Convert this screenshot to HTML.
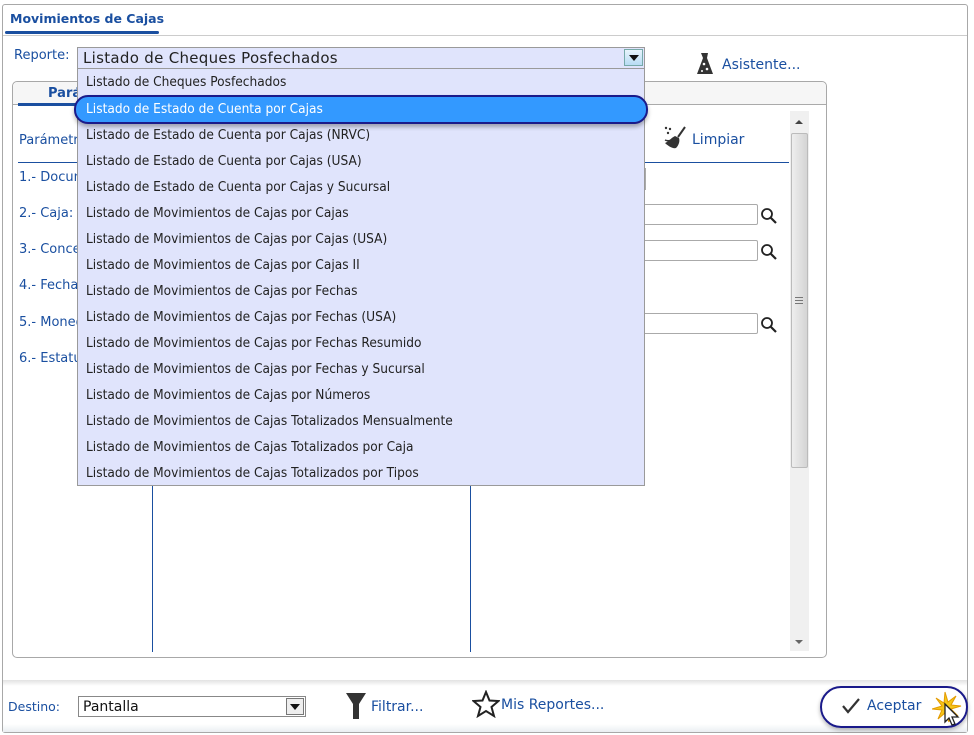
<!DOCTYPE html>
<html><head><meta charset="utf-8"><style>
*{box-sizing:border-box;margin:0;padding:0}
body{width:974px;height:735px;background:#fff;font-family:"DejaVu Sans","Liberation Sans",sans-serif;position:relative;overflow:hidden;color:#1a4fa0}
.a{position:absolute}
.outer{left:2px;top:4px;width:966px;height:729px;border:1px solid #a8a8a8;border-radius:3px}
.lbl{font-size:13px;color:#1a4fa0;white-space:nowrap}
.dd{left:77px;top:69px;width:568px;height:417px;background:#e0e4fc;border:1px solid #9a9a9a;border-top:none}
.it{position:absolute;left:8px;font-size:13px;color:#222;font-family:"DejaVu Sans",sans-serif;white-space:nowrap;transform:scaleX(0.94);transform-origin:left}
.inp{position:absolute;left:640px;width:118px;height:21px;border:1px solid #aaa;border-radius:2px;background:#fff}
</style></head><body>
<div class="a outer"></div>
<div class="a" style="left:3px;top:35px;width:964px;height:1px;background:#ccc"></div>
<div class="a lbl" style="left:10px;top:11px;font-weight:bold;font-size:12.5px;color:#1a4fa0">Movimientos de Cajas</div>
<div class="a" style="left:5px;top:31px;width:154px;height:3px;background:#1a4fa0;border-radius:2px"></div>

<div class="a lbl" style="left:14px;top:48px">Reporte:</div>
<div class="a" style="left:77px;top:47px;width:568px;height:22px;border:1px solid #9a9a9a;background:#e0e4fc"></div>
<div class="a" style="left:83px;top:49px;font-size:15px;color:#222;white-space:nowrap;letter-spacing:0.3px">Listado de Cheques Posfechados</div>
<div class="a" style="left:624px;top:49px;width:19px;height:17px;border:1px solid #7aa;background:linear-gradient(#e8f4fc,#b8dcf4)"></div>
<div class="a" style="left:629px;top:55px;width:0;height:0;border-left:5px solid transparent;border-right:5px solid transparent;border-top:6px solid #111"></div>

<svg class="a" style="left:696px;top:52px" width="18" height="24"><path d="M5 1h7l-1 5 6 16H1L7 6z" fill="#333"/><circle cx="8" cy="12" r="1.3" fill="#fff"/><circle cx="11" cy="17" r="1.3" fill="#fff"/><circle cx="6" cy="19" r="1" fill="#fff"/></svg>
<div class="a lbl" style="left:722px;top:57px;font-size:14px">Asistente...</div>

<!-- inner panel -->
<div class="a" style="left:12px;top:81px;width:815px;height:577px;border:1px solid #a8a8a8;border-radius:5px;background:#fff"></div>
<div class="a" style="left:13px;top:82px;width:813px;height:23px;background:#f6f6f6;border-bottom:1px solid #aaa;border-radius:5px 5px 0 0"></div>
<div class="a lbl" style="left:48px;top:86px;font-weight:bold">Pará</div>
<div class="a" style="left:18px;top:103px;width:70px;height:3px;background:#1a4fa0"></div>
<div class="a lbl" style="left:19px;top:133px">Parámetros</div>
<div class="a" style="left:18px;top:162px;width:771px;height:1px;background:#1a4fa0"></div>
<div class="a lbl" style="left:19px;top:170px">1.- Documento</div>
<div class="a lbl" style="left:19px;top:206px">2.- Caja:</div>
<div class="a lbl" style="left:19px;top:242px">3.- Concepto</div>
<div class="a lbl" style="left:19px;top:278px">4.- Fecha</div>
<div class="a lbl" style="left:19px;top:315px">5.- Moneda</div>
<div class="a lbl" style="left:19px;top:351px">6.- Estatus</div>
<div class="a" style="left:152px;top:470px;width:1px;height:182px;background:#1a4fa0"></div>
<div class="a" style="left:470px;top:470px;width:1px;height:182px;background:#1a4fa0"></div>
<div class="a" style="left:644px;top:168px;width:2px;height:22px;background:#aaa"></div>
<div class="inp" style="top:204px"></div>
<div class="inp" style="top:240px"></div>
<div class="inp" style="top:313px"></div>
<svg class="a" style="left:760px;top:207px" width="18" height="18"><circle cx="7" cy="7" r="5" fill="none" stroke="#222" stroke-width="1.8"/><path d="M11 11l5 5" stroke="#222" stroke-width="2.2"/></svg>
<svg class="a" style="left:760px;top:243px" width="18" height="18"><circle cx="7" cy="7" r="5" fill="none" stroke="#222" stroke-width="1.8"/><path d="M11 11l5 5" stroke="#222" stroke-width="2.2"/></svg>
<svg class="a" style="left:760px;top:316px" width="18" height="18"><circle cx="7" cy="7" r="5" fill="none" stroke="#222" stroke-width="1.8"/><path d="M11 11l5 5" stroke="#222" stroke-width="2.2"/></svg>
<svg class="a" style="left:663px;top:126px" width="24" height="24"><circle cx="3" cy="2" r="1.2" fill="#333"/><circle cx="7" cy="3" r="1.2" fill="#333"/><circle cx="5" cy="7" r="1.2" fill="#333"/><path d="M22 1l-7 10" stroke="#333" stroke-width="2"/><path d="M12 10c-4 2-7 6-10 7 3 3 8 6 11 5 3-3 4-7 3-10z" fill="#333"/><path d="M2 14c2 1 5 1 6 0" stroke="#333" stroke-width="1.5" fill="none"/></svg>
<div class="a lbl" style="left:692px;top:132px;font-size:14px">Limpiar</div>
<!-- scrollbar -->
<div class="a" style="left:790px;top:111px;width:19px;height:540px;background:#f0f0f0"></div>
<div class="a" style="left:791px;top:133px;width:17px;height:335px;background:linear-gradient(90deg,#eee,#d4d4d4);border:1px solid #bbb;border-radius:2px"></div>
<div class="a" style="left:795px;top:120px;border-left:4px solid transparent;border-right:4px solid transparent;border-bottom:4px solid #444"></div>
<div class="a" style="left:795px;top:640px;border-left:4px solid transparent;border-right:4px solid transparent;border-top:4px solid #666"></div>
<div class="a" style="left:795px;top:297px;width:8px;height:7px;border-top:1px solid #777;border-bottom:1px solid #777"></div>
<div class="a" style="left:795px;top:300px;width:8px;height:1px;background:#777"></div>

<!-- dropdown -->
<div class="a dd">
<div class="it" style="top:6px">Listado de Cheques Posfechados</div>
<div style="position:absolute;left:-4px;top:26px;width:574px;height:29px;background:#3399ff;border:2px solid #1a1a8a;border-radius:14px;box-shadow:0 3px 4px rgba(0,0,0,.3)"></div>
<div class="it" style="top:33px;color:#fff">Listado de Estado de Cuenta por Cajas</div>
<div class="it" style="top:59px">Listado de Estado de Cuenta por Cajas (NRVC)</div>
<div class="it" style="top:85px">Listado de Estado de Cuenta por Cajas (USA)</div>
<div class="it" style="top:111px">Listado de Estado de Cuenta por Cajas y Sucursal</div>
<div class="it" style="top:137px">Listado de Movimientos de Cajas por Cajas</div>
<div class="it" style="top:163px">Listado de Movimientos de Cajas por Cajas (USA)</div>
<div class="it" style="top:189px">Listado de Movimientos de Cajas por Cajas II</div>
<div class="it" style="top:215px">Listado de Movimientos de Cajas por Fechas</div>
<div class="it" style="top:241px">Listado de Movimientos de Cajas por Fechas (USA)</div>
<div class="it" style="top:267px">Listado de Movimientos de Cajas por Fechas Resumido</div>
<div class="it" style="top:293px">Listado de Movimientos de Cajas por Fechas y Sucursal</div>
<div class="it" style="top:319px">Listado de Movimientos de Cajas por Números</div>
<div class="it" style="top:345px">Listado de Movimientos de Cajas Totalizados Mensualmente</div>
<div class="it" style="top:371px">Listado de Movimientos de Cajas Totalizados por Caja</div>
<div class="it" style="top:397px">Listado de Movimientos de Cajas Totalizados por Tipos</div>
</div>

<!-- bottom -->
<div class="a" style="left:3px;top:680px;width:964px;height:52px;background:linear-gradient(#e2e2e2,#fff 6px,#fff 44px,#eaeef2)"></div>
<div class="a lbl" style="left:8px;top:699px;font-size:12.5px">Destino:</div>
<div class="a" style="left:78px;top:696px;width:228px;height:21px;border:1px solid #888;background:#fff"></div>
<div class="a" style="left:83px;top:699px;font-size:14px;color:#111">Pantalla</div>
<div class="a" style="left:286px;top:698px;width:18px;height:17px;border:1px solid #777;background:#eee"></div>
<div class="a" style="left:290px;top:704px;border-left:5px solid transparent;border-right:5px solid transparent;border-top:6px solid #111"></div>
<svg class="a" style="left:345px;top:692px" width="22" height="28"><path d="M1 1h20l-7 11v15h-6V12z" fill="#333"/></svg>
<div class="a lbl" style="left:371px;top:699px;font-size:14px">Filtrar...</div>
<svg class="a" style="left:472px;top:690px" width="28" height="28"><path d="M14 2l3.5 8.5 9 .5-7 6 2.5 9-8-5-8 5 2.5-9-7-6 9-.5z" fill="none" stroke="#222" stroke-width="2"/></svg>
<div class="a lbl" style="left:501px;top:697px;font-size:14px">Mis Reportes...</div>
<div class="a" style="left:820px;top:686px;width:148px;height:42px;border:2px solid #1a1a8a;border-radius:21px;box-shadow:0 2px 4px rgba(0,0,0,.3)"></div>
<svg class="a" style="left:841px;top:697px" width="20" height="18"><path d="M2 9l5 6L18 2" fill="none" stroke="#333" stroke-width="2.2"/></svg>
<div class="a lbl" style="left:867px;top:698px;font-size:14px">Aceptar</div>
<svg class="a" style="left:932px;top:690px" width="34" height="40"><path d="M13 2l3 10 8-6-5 9 10 1-10 3 7 7-9-4 0 10-4-9-7 6 4-9-10-1 10-3-6-8 8 5z" fill="#f5c518" stroke="#e39b00" stroke-width="1"/><path d="M13 14v18l4-4 3 7 3-1-3-7h6z" fill="#fff" stroke="#222" stroke-width="1.3"/></svg>
</body></html>
